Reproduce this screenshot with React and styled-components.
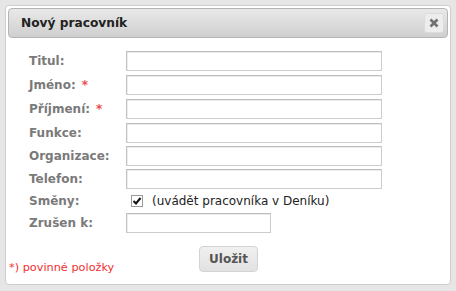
import React from "react";
import styled, { createGlobalStyle } from "styled-components";

const GlobalStyle = createGlobalStyle`
  html, body { margin: 0; padding: 0; background: #e6e6e6; }
  body { font-family: "DejaVu Sans", Verdana, sans-serif; }
`;

const Page = styled.div`
  padding: 5px;
  width: 456px;
  height: 291px;
  box-sizing: border-box;
`;

const Dialog = styled.div`
  width: 446px;
  height: 280px;
  box-sizing: border-box;
  background: #fff;
  border: 1px solid #cdcdcd;
  border-radius: 4px;
  padding: 2px;
  display: flex;
  flex-direction: column;
`;

const TitleBar = styled.div`
  height: 30px;
  box-sizing: border-box;
  border: 1px solid #b4b4b4;
  border-radius: 4px;
  background: linear-gradient(#e9e9e9, #cfcfcf);
  display: flex;
  align-items: center;
  justify-content: space-between;
  padding: 0 3px 0 12px;
`;

const Title = styled.span`
  font-weight: bold;
  font-size: 12.2px;
  color: #222;
`;

const CloseButton = styled.button`
  width: 20px;
  height: 20px;
  box-sizing: border-box;
  border: 1px solid #dcdcdc;
  border-radius: 3px;
  background: #ededed;
  padding: 0;
  display: flex;
  align-items: center;
  justify-content: center;
`;

const Form = styled.div`
  padding: 11px 0 0 21px;
  display: flex;
  flex-direction: column;
`;

const Row = styled.div`
  display: grid;
  grid-template-columns: 97px 1fr;
  align-items: center;
  height: ${(p) => p.$h}px;
`;

const Label = styled.label`
  font-weight: bold;
  font-size: 12px;
  color: #7a7a7a;
  white-space: nowrap;
`;

const Req = styled.span`
  color: #f04a4a;
  font-weight: bold;
  margin-left: 6px;
`;

const Input = styled.input`
  width: ${(p) => p.$w}px;
  height: 20px;
  box-sizing: border-box;
  border: 1px solid #cccccc;
  border-top-color: #bdbdbd;
  border-left-color: #c4c4c4;
  box-shadow: inset 1px 1px 0 #ececec;
  margin: 0;
  padding: 0 3px;
  font: inherit;
`;

const CheckWrap = styled.div`
  display: flex;
  align-items: center;
  padding-left: 5px;
  gap: 9px;
  font-size: 12px;
  color: #222;
`;

const CheckBox = styled.span`
  width: 12px;
  height: 12px;
  box-sizing: border-box;
  border: 1px solid #9a9a9a;
  background: #fff;
  display: flex;
  align-items: center;
  justify-content: center;
`;

const Footer = styled.div`
  margin-top: auto;
  display: grid;
  grid-template-columns: 1fr auto 1fr;
  align-items: end;
  padding: 0 0 9px 1px;
`;

const Note = styled.span`
  color: #f03030;
  font-size: 11.3px;
  justify-self: start;
  margin-bottom: -1px;
`;

const SaveButton = styled.button`
  width: 59px;
  height: 26px;
  box-sizing: border-box;
  border: 1px solid #d3d3d3;
  border-radius: 4px;
  background: linear-gradient(#f0f0f0, #e2e2e2);
  color: #555;
  font-family: inherit;
  font-size: 12px;
  font-weight: bold;
  padding: 0;
  margin-bottom: 1px;
`;

const fields = [
  { label: "Titul:", h: 23 },
  { label: "Jméno:", h: 25, req: true },
  { label: "Příjmení:", h: 24, req: true },
  { label: "Funkce:", h: 24 },
  { label: "Organizace:", h: 22 },
  { label: "Telefon:", h: 23 },
];

export default function App() {
  return (
    <>
      <GlobalStyle />
      <Page>
        <Dialog>
          <TitleBar>
            <Title>Nový pracovník</Title>
            <CloseButton aria-label="close">
              <svg width="10" height="10" viewBox="0 0 10 10">
                <path d="M1.5 1.5 L8.5 8.5 M8.5 1.5 L1.5 8.5" stroke="#707070" strokeWidth="2.6" />
              </svg>
            </CloseButton>
          </TitleBar>
          <Form>
            {fields.map((f) => (
              <Row key={f.label} $h={f.h}>
                <Label>
                  {f.label}
                  {f.req && <Req>*</Req>}
                </Label>
                <Input $w={256} />
              </Row>
            ))}
            <Row $h={22}>
              <Label>Směny:</Label>
              <CheckWrap>
                <CheckBox>
                  <svg width="10" height="10" viewBox="0 0 10 10">
                    <path d="M1.5 5 L4 7.5 L8.5 2" stroke="#111" strokeWidth="2" fill="none" />
                  </svg>
                </CheckBox>
                <span>(uvádět pracovníka v Deníku)</span>
              </CheckWrap>
            </Row>
            <Row $h={22}>
              <Label>Zrušen k:</Label>
              <Input $w={145} />
            </Row>
          </Form>
          <Footer>
            <Note>*) povinné položky</Note>
            <SaveButton>Uložit</SaveButton>
            <span />
          </Footer>
        </Dialog>
      </Page>
    </>
  );
}
